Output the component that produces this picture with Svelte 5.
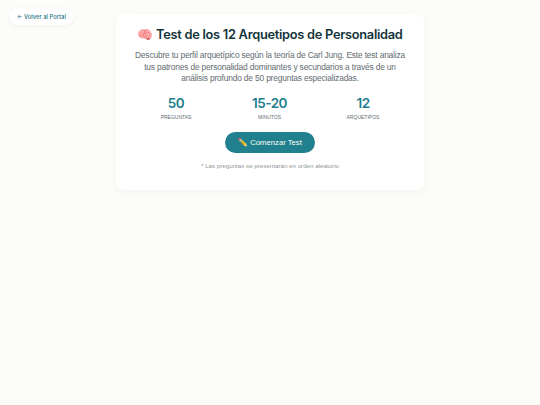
<script>
  const stats = [
    { value: '50', label: 'Preguntas' },
    { value: '15-20', label: 'Minutos' },
    { value: '12', label: 'Arquetipos' }
  ];
</script>

<div class="page">
  <a class="back" href="#top">← Volver al Portal</a>
  <main class="card">
    <h1>🧠 Test de los 12 Arquetipos de Personalidad</h1>
    <p class="desc">Descubre tu perfil arquetípico según la teoría de Carl Jung. Este test analiza tus patrones de personalidad dominantes y secundarios a través de un análisis profundo de 50 preguntas especializadas.</p>
    <div class="stats">
      {#each stats as s}
        <div class="stat">
          <div class="value">{s.value}</div>
          <div class="label">{s.label}</div>
        </div>
      {/each}
    </div>
    <button class="start">✏️ Comenzar Test</button>
    <p class="note">* Las preguntas se presentarán en orden aleatorio</p>
  </main>
</div>

<style>
  :global(body) {
    margin: 0;
    background: #fcfcf9;
  }
  .page {
    position: relative;
    min-height: 405px;
    box-sizing: border-box;
    padding-top: 14px;
    font-family: "Liberation Sans", Arial, sans-serif;
    display: flex;
    justify-content: center;
    align-items: flex-start;
  }
  .back {
    position: absolute;
    left: 9px;
    top: 8px;
    height: 17px;
    padding: 0 8px;
    display: flex;
    align-items: center;
    background: #fff;
    border-radius: 9px;
    box-shadow: 0 1px 5px rgba(0, 0, 0, 0.05);
    color: #1d7480;
    font-family: Inter, sans-serif;
    font-size: 5.8px;
    font-weight: 500;
    text-decoration: none;
  }
  .card {
    width: 308px;
    box-sizing: border-box;
    padding: 12px 16px 20px;
    background: #fff;
    border-radius: 8px;
    box-shadow: 0 2px 10px rgba(0, 0, 0, 0.04);
    text-align: center;
  }
  h1 {
    margin: 0 0 7px;
    font-family: Inter, sans-serif;
    font-size: 12.8px;
    letter-spacing: -0.27px;
    line-height: 17px;
    font-weight: 600;
    color: #13343b;
  }
  .desc {
    margin: 0 0 10.5px;
    font-size: 8.4px;
    letter-spacing: -0.167px;
    line-height: 11.5px;
    color: #626c71;
  }
  .stats {
    display: grid;
    grid-template-columns: repeat(3, 93.5px);
    justify-content: center;
    padding-right: 1px;
    margin-bottom: 10.5px;
  }
  .value {
    font-family: Inter, sans-serif;
    font-size: 13.5px;
    letter-spacing: -0.5px;
    line-height: 17px;
    font-weight: 600;
    color: #21808d;
  }
  .label {
    margin-top: 2px;
    font-size: 5px;
    line-height: 7px;
    text-transform: uppercase;
    color: #626c71;
  }
  .start {
    display: block;
    width: 90px;
    height: 21px;
    margin: 0 auto;
    padding: 0;
    border: 0;
    border-radius: 11px;
    background: #21808d;
    color: #fcfcf9;
    font: 400 7.7px "Liberation Sans", sans-serif;
  }
  .note {
    margin: 9px 0 0;
    font-size: 6.2px;
    line-height: 8px;
    color: #8f979b;
  }
</style>
